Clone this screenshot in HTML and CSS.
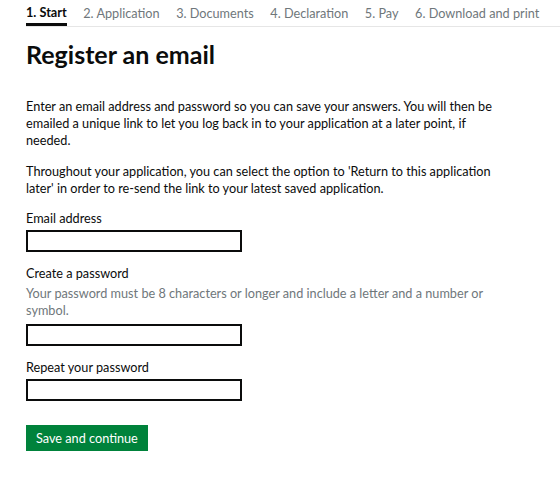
FILE: index.html
```html
<!DOCTYPE html>
<html>
<head>
<meta charset="utf-8">
<link rel="stylesheet" href="styles.css">
</head>
<body>
<nav class="steps">
  <span class="step current">1. Start</span>
  <span class="step">2. Application</span>
  <span class="step">3. Documents</span>
  <span class="step">4. Declaration</span>
  <span class="step">5. Pay</span>
  <span class="step">6. Download and print</span>
</nav>
<main class="main">
  <h1 class="title">Register an email</h1>
  <div class="intro">
    <p class="body">Enter an email address and password so you can save your answers. You will then be emailed a unique link to let you log back in to your application at a later point, if needed.</p>
    <p class="body">Throughout your application, you can select the option to 'Return to this application later' in order to re-send the link to your latest saved application.</p>
  </div>
  <div class="field">
    <label class="label">Email address</label>
    <input class="input" type="text">
  </div>
  <div class="field">
    <label class="label">Create a password</label>
    <div class="hint">Your password must be 8 characters or longer and include a letter and a number or symbol.</div>
    <input class="input" type="password">
  </div>
  <div class="field last">
    <label class="label">Repeat your password</label>
    <input class="input" type="password">
  </div>
  <button class="button">Save and continue</button>
</main>
</body>
</html>
```
FILE: styles.css
```css
html, body { margin: 0; padding: 0; background: #fff; }
body { font-family: "Lato", "Liberation Sans", sans-serif; color: #0b0c0c; }
.steps {
  display: flex;
  gap: 16.5px;
  margin-left: 26px;
  height: 26px;
  border-bottom: 1px solid #e6e6e6;
  font-size: 12.7px;
  line-height: 26px;
}
.step { color: #6f777b; white-space: nowrap; }
.step.current { color: #0b0c0c; font-weight: 700; border-bottom: 3px solid #0b0c0c; line-height: 24px; height: 23px; }
.main { padding: 0 26px; }
.title { font-size: 25px; font-weight: 700; margin: 12px 0 29px; line-height: 30px; }
.intro { max-width: 470px; margin-bottom: 13px; }
.body { font-size: 12.7px; line-height: 17px; margin: 0 0 14px; }
.body:last-child { margin-bottom: 0; }
.field { margin-bottom: 13px; }
.field.last { margin-bottom: 0; }
.label { display: block; font-size: 12.7px; line-height: 17px; margin-bottom: 3px; }
.hint { font-size: 12.7px; line-height: 17px; color: #6f777b; margin-bottom: 5px; max-width: 470px; }
.input { display: block; box-sizing: border-box; width: 216px; height: 22px; border: 2px solid #0b0c0c; margin: 0; padding: 0 4px; }
.button {
  display: block;
  margin-top: 24px;
  background: #00823b;
  color: #fff;
  border: 0;
  box-shadow: 0 2px 0 #003618;
  font-family: inherit;
  font-size: 12.7px;
  line-height: 17px;
  padding: 0 10px;
  height: 26px;
}
```
